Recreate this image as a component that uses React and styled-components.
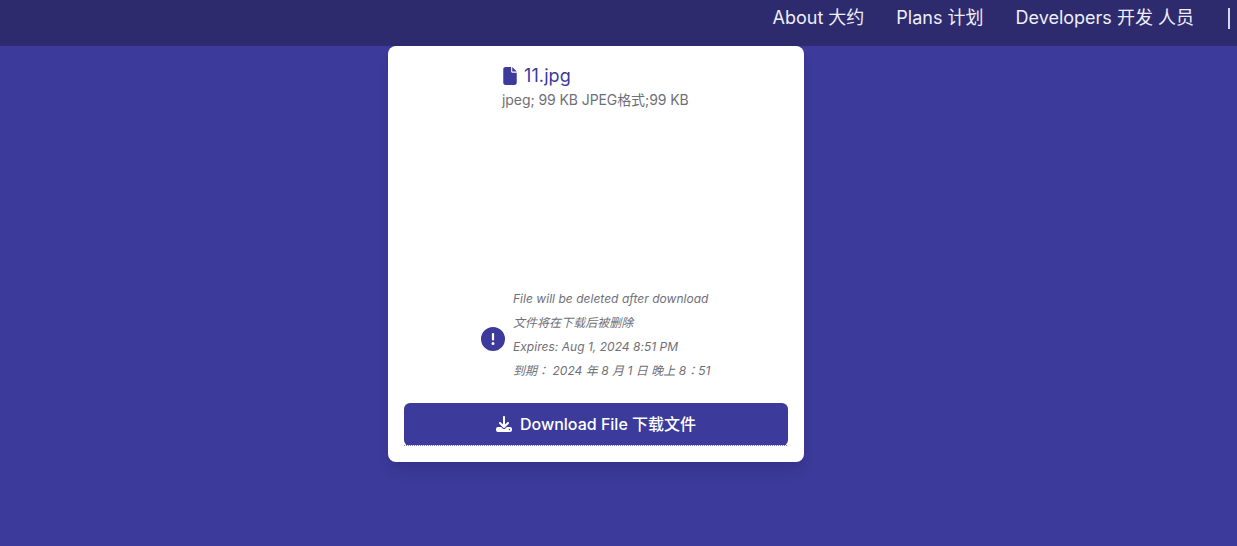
import React from "react";
import styled, { createGlobalStyle } from "styled-components";

const Global = createGlobalStyle`
  html, body { margin: 0; padding: 0; height: 100%; overflow: hidden; }
  body { background: #3c3a9a; font-family: Inter, "Noto Sans CJK SC", sans-serif; }
  * { box-sizing: border-box; }
`;

const CJK = `Inter, "Noto Sans CJK SC", sans-serif`;
const CJK_CENTERED = `Inter, "Noto Sans CJK TC", sans-serif`;

const Page = styled.div`
  height: 546px;
  display: flex;
  flex-direction: column;
  background: #3c3a9a;
`;

const TopBar = styled.header`
  height: 46px;
  flex: none;
  background: #2d2a6e;
  display: flex;
  justify-content: flex-end;
  align-items: center;
  padding: 0 7.5px 10px 0;
`;

const NavLink = styled.a`
  color: #eeeef8;
  font: 400 18px/24px ${CJK};
  margin-right: 32px;
  white-space: nowrap;
`;

const NavSpacer = styled.span`
  width: 1.5px;
  margin-left: 2px;
  height: 21px;
  background: #d6d6ec;
`;

const Main = styled.main`
  display: flex;
  justify-content: center;
  padding-right: 45px;
`;

const Card = styled.section`
  width: 416px;
  height: 416px;
  background: #fff;
  border-radius: 8px;
  box-shadow: 0 10px 15px -3px rgba(0, 0, 0, 0.1), 0 4px 6px -2px rgba(0, 0, 0, 0.05);
  padding: 16px;
  display: flex;
  flex-direction: column;
`;

const FileBlock = styled.div`
  height: 228px;
  padding-left: 99px;
`;

const FileName = styled.div`
  display: flex;
  align-items: center;
  gap: 7px;
  color: #3c3a9a;
  font: 400 18px/28px ${CJK};
  letter-spacing: 0.1px;
`;

const FileMeta = styled.div`
  margin-left: -1px;
  color: #6f6f78;
  font: 400 14px/20px ${CJK};
  letter-spacing: -0.08px;
`;

const Notice = styled.div`
  display: flex;
  align-items: center;
  padding-left: 77px;
  gap: 8px;
`;

const NoticeIcon = styled.svg`
  flex: none;
  width: 24px;
  height: 24px;
  margin-top: 8px;
  fill: #3c3a9a;
`;

const NoticeText = styled.div`
  display: flex;
  flex-direction: column;
`;

const NoticeLine = styled.p`
  margin: 0;
  color: #6f6f78;
  font: italic 400 12px/24px ${(p) => (p.$centeredPunctuation ? CJK_CENTERED : CJK)};
  letter-spacing: 0.03px;
  white-space: pre;
`;

const DownloadButton = styled.button`
  position: relative;
  margin-top: 20px;
  height: 43px;
  width: 384px;
  padding: 0 0 1px;
  border: 0;
  border-radius: 6px;
  background: #3c3a9a;
  color: #fff;
  font: 500 16px/24px ${CJK};
  display: flex;
  align-items: center;
  justify-content: center;
  gap: 8px;

  &::after {
    content: "";
    position: absolute;
    left: 0;
    right: 0;
    bottom: 0;
    height: 1px;
    background: repeating-linear-gradient(90deg, #8583c4 0 1px, #f4f4fb 1px 2px);
  }
`;

const FileIcon = () => (
  <svg width="14" height="18" viewBox="0 0 384 512" fill="#3c3a9a" aria-hidden="true">
    <path d="M0 64C0 28.700 28.700 0 64 0H224V128c0 17.700 14.300 32 32 32H384V448c0 35.300-28.700 64-64 64H64c-35.300 0-64-28.700-64-64V64zm384 64H256V0L384 128z" />
  </svg>
);

const AlertIcon = () => (
  <NoticeIcon viewBox="0 0 512 512" aria-hidden="true">
    <path d="M256 512A256 256 0 1 0 256 0a256 256 0 1 0 0 512zm0-384c13.300 0 24 10.700 24 24V264c0 13.300-10.700 24-24 24s-24-10.700-24-24V152c0-13.300 10.700-24 24-24zM224 352a32 32 0 1 1 64 0 32 32 0 1 1 -64 0z" />
  </NoticeIcon>
);

const DownloadIcon = () => (
  <svg width="16" height="16" viewBox="0 0 512 512" fill="#fff" aria-hidden="true">
    <path d="M288 32c0-17.700-14.300-32-32-32s-32 14.300-32 32V274.700l-73.400-73.400c-12.500-12.500-32.800-12.500-45.300 0s-12.500 32.800 0 45.300l128 128c12.500 12.500 32.800 12.500 45.300 0l128-128c12.500-12.500 12.500-32.800 0-45.300s-32.800-12.500-45.300 0L288 274.700V32zM64 352c-35.300 0-64 28.700-64 64v32c0 35.300 28.700 64 64 64H448c35.300 0 64-28.700 64-64V416c0-35.300-28.700-64-64-64H346.500l-45.300 45.300c-25 25-65.500 25-90.500 0L165.500 352H64zm368 56a24 24 0 1 1 0 48 24 24 0 1 1 0-48z" />
  </svg>
);

export default function App() {
  return (
    <Page>
      <Global />
      <TopBar>
        <NavLink>About 大约</NavLink>
        <NavLink>Plans 计划</NavLink>
        <NavLink>Developers 开发 人员</NavLink>
        <NavSpacer />
      </TopBar>
      <Main>
        <Card>
          <FileBlock>
            <FileName>
              <FileIcon />
              11.jpg
            </FileName>
            <FileMeta>jpeg; 99 KB JPEG格式;99 KB</FileMeta>
          </FileBlock>
          <Notice>
            <AlertIcon />
            <NoticeText>
              <NoticeLine>File will be deleted after download</NoticeLine>
              <NoticeLine>文件将在下载后被删除</NoticeLine>
              <NoticeLine>Expires: Aug 1, 2024 8:51 PM</NoticeLine>
              <NoticeLine $centeredPunctuation>到期： 2024 年 8 月 1 日 晚上 8：51</NoticeLine>
            </NoticeText>
          </Notice>
          <DownloadButton>
            <DownloadIcon />
            Download File 下载文件
          </DownloadButton>
        </Card>
      </Main>
    </Page>
  );
}
